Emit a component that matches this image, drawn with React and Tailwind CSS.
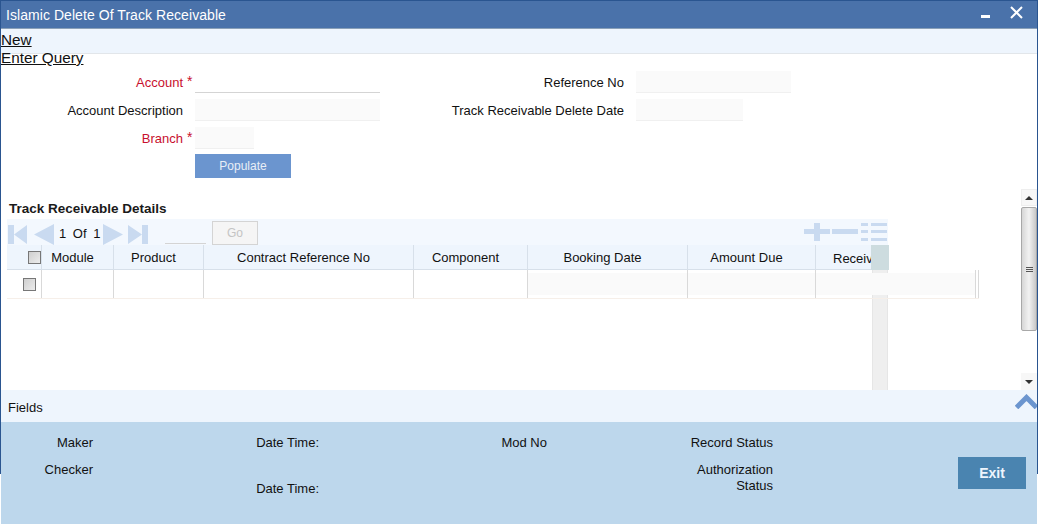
import React from "react";

const FONT = "font-['Liberation_Sans',Arial,sans-serif]";

const Field = ({ label, required, labelWidth, inputWidth, underline }) => (
  <div className="flex h-[22px] items-center">
    <div className={`pt-px text-right text-[13px] ${required ? "text-[#c8102e]" : "text-[#111]"}`} style={{ width: labelWidth }}>
      {label}
    </div>
    <div className="w-[12px] self-start pl-[4px] pt-[3px] text-sm leading-none text-[#c8102e]">{required ? "*" : ""}</div>
    <div
      className={`h-[22px] border-b ${underline ? "bg-white border-[#d4d4d4]" : "bg-[#fafafa] border-[#f0f0f0]"}`}
      style={{ width: inputWidth }}
    />
  </div>
);

const Check = () => (
  <div className="h-[13px] w-[13px] border border-[#777] bg-gradient-to-br from-[#cfcfcf] to-[#ececec]" />
);

const HeadCell = ({ width, children }) => (
  <div className="flex h-full items-center justify-center border-r border-[#d7e0ea] pr-[10px] pt-px text-[13px] text-[#111]" style={{ width }}>
    {children}
  </div>
);

const RowCell = ({ width, filled }) => (
  <div className="h-full border-r border-[#d9d9d9] py-[3px]" style={{ width }}>
    <div className={`h-full ${filled ? "bg-[#fafafa]" : "bg-white"}`} />
  </div>
);

const App = () => {
  const columns = [
    ["Module", 72],
    ["Product", 90],
    ["Contract Reference No", 210],
    ["Component", 114],
    ["Booking Date", 160],
    ["Amount Due", 128],
  ];

  return (
    <div className={`relative flex h-[524px] w-[1038px] flex-col overflow-hidden bg-white ${FONT}`}>
      {/* title bar */}
      <div className="flex h-[29px] shrink-0 items-center justify-between border-t border-b border-t-[#2a5590] border-b-[#8aa0b8] bg-[#4a72aa] pl-[6px] pr-[15px] text-sm tracking-[0.06px] text-white">
        <span>Islamic Delete Of Track Receivable</span>
        <div className="flex items-center gap-[20px]">
          <div className="mt-[3px] h-[3px] w-[9px] bg-white" />
          <svg width="13" height="13" viewBox="0 0 13 13" className="mb-[4px]" stroke="#fff" strokeWidth="2" fill="none">
            <path d="M1 1l11 11M12 1L1 12" />
          </svg>
        </div>
      </div>

      {/* toolbar */}
      <div className="relative h-[25px] shrink-0 border-b border-[#e2e6ea] bg-[#eef5fd] pl-[1px] text-[15.300px] text-[#111]">
        <div className="mt-[2px] leading-[18px] underline">New</div>
        <div className="leading-[18px] underline">Enter Query</div>
      </div>

      {/* form */}
      <div className="flex h-[135px] shrink-0 pt-[17px]">
        <div className="flex w-[400px] flex-col gap-[6px]">
          <Field label="Account" required labelWidth={183} inputWidth={185} underline />
          <Field label="Account Description" labelWidth={183} inputWidth={185} />
          <Field label="Branch" required labelWidth={183} inputWidth={59} />
          <div className="ml-[195px] mt-[-1px] flex h-6 w-24 items-center justify-center bg-[#6b95cf] text-xs text-[#e8eef6]">
            Populate
          </div>
        </div>
        <div className="flex flex-col gap-[6px]">
          <Field label="Reference No" labelWidth={224} inputWidth={155} />
          <Field label="Track Receivable Delete Date" labelWidth={224} inputWidth={107} />
        </div>
      </div>

      {/* details */}
      <div className="relative flex h-[201px] shrink-0">
        <div className="relative min-w-0 flex-1 pl-[7px]">
          <div className="pl-[2px] pt-[12px] text-[13.500px] font-bold leading-[16px] text-[#1a1a1a]">Track Receivable Details</div>
          <div className="mt-[2px] flex h-[26px] w-[881px] items-center bg-[#f3f8fe] text-[13px] text-[#111]">
            <svg width="46" height="21" viewBox="0 0 46 21" fill="#c9daf0" className="ml-[1px] mt-[4px] shrink-0">
              <path d="M0 1h6v19H0zM6 10.500L19 1v19zM26 10.500L46 0v21z" />
            </svg>
            <span className="ml-[5px] w-[39px] whitespace-nowrap pt-[3px] [word-spacing:3px]">1 Of 1</span>
            <svg width="45" height="21" viewBox="0 0 45 21" fill="#c9daf0" className="ml-[5px] mt-[4px] shrink-0">
              <path d="M0 0l20 10.500L0 21zM25 1l14 9.500L25 20zM39 1h6v19h-6z" />
            </svg>
            <div className="ml-[17px] mt-[-1px] h-[25px] w-[41px] shrink-0 border-b border-[#d4d4d4]" />
            <div className="ml-[6px] mt-[1px] flex h-[24px] w-[46px] shrink-0 items-center justify-center border border-[#d4d4d4] bg-[#f5f5f5] text-xs text-[#c4c4c4]">
              Go
            </div>
            <svg width="83" height="18" viewBox="0 0 83 18" fill="#c9daf0" className="ml-[546px] shrink-0">
              <path d="M0 6h10V0h6v6h10v5H16v7h-6v-7H0zM28 6h26v5H28zM57 0h7v3h-7zM67 0h16v3H67zM57 7h7v3h-7zM67 7h16v3H67zM57 15h7v3h-7zM67 15h16v3H67z" />
            </svg>
          </div>

          {/* table */}
          <div className="flex h-[25px] w-[865px] border-b border-[#d7e0ea] bg-[#eef5fd]">
            <div className="flex h-full w-[35px] items-center justify-end border-r border-[#d7e0ea]">
              <Check />
            </div>
            {columns.map(([name, width]) => (
              <HeadCell key={name} width={width}>{name}</HeadCell>
            ))}
            <div className="flex-1 overflow-hidden whitespace-nowrap pl-[17px] pt-[4px] text-[13px] text-[#111]">Receiv</div>
          </div>
          <div className="relative z-10 flex h-[29px] w-[972px] border-b border-[#f6efe9]">
            <div className="flex h-full w-[35px] items-center justify-end border-r border-[#d9d9d9] pr-[5px]">
              <Check />
            </div>
            <RowCell width={72} />
            <RowCell width={90} />
            <RowCell width={210} />
            <RowCell width={114} />
            <RowCell width={160} filled />
            <RowCell width={128} filled />
            <RowCell width={160} filled />
            <div className="w-[3px] border-r border-[#d9d9d9]" />
          </div>
          {/* stray column scrollbar over the table */}
          <div className="absolute left-[871px] top-[56px] h-[25px] w-[18px] bg-[#cddcdf]" />
          <div className="absolute left-[872px] top-[81px] h-[120px] w-[16px] border-x border-[#e6e6e6] bg-[#efefef]" />
        </div>

        {/* scrollbar */}
        <div className="flex w-[17px] shrink-0 flex-col items-center pr-[1px]">
          <div className="flex h-[17px] w-full items-center justify-center border border-[#eee] bg-[#f7f7f7]">
            <div className="h-0 w-0 border-x-[4px] border-b-[4px] border-x-transparent border-b-[#333]" />
          </div>
          <div className="mt-[1px] flex h-[124px] w-full flex-col items-center justify-center gap-[1px] rounded-[2px] border border-[#a8a8a8] bg-gradient-to-r from-[#d6d6d6] via-[#f2f2f2] to-[#c8c8c8]">
            <div className="h-px w-[7px] bg-[#555]" />
            <div className="h-px w-[7px] bg-[#555]" />
            <div className="h-px w-[7px] bg-[#555]" />
          </div>
          <div className="flex-1" />
          <div className="flex h-[17px] w-full items-center justify-center bg-[#f7f7f7]">
            <div className="h-0 w-0 border-x-[4px] border-t-[4px] border-x-transparent border-t-[#333]" />
          </div>
        </div>
      </div>

      {/* fields bar */}
      <div className="flex h-[32px] shrink-0 justify-between bg-[#eef5fd] pl-[8px] text-[13px] text-[#111]">
        <span className="pt-[10px] leading-4">Fields</span>
        <svg width="23" height="15" viewBox="0 0 23 15" fill="none" stroke="#6b95cf" strokeWidth="5" className="mt-[4px]">
          <path d="M1.500 13.500L11.500 3.500L21.500 13.500" />
        </svg>
      </div>

      {/* audit footer */}
      <div className="mx-px flex flex-1 bg-[#bdd7ec] text-[13px] leading-4 text-[#111]">
        <div className="flex w-[92px] flex-col items-end gap-[11px] pt-[13px]">
          <span>Maker</span>
          <span>Checker</span>
        </div>
        <div className="flex w-[226px] flex-col items-end gap-[30px] pt-[13px]">
          <span>Date Time:</span>
          <span>Date Time:</span>
        </div>
        <div className="w-[228px] pt-[13px] text-right">Mod No</div>
        <div className="flex w-[226px] flex-col items-end gap-[11px] pt-[13px] text-right">
          <span>Record Status</span>
          <span>
            Authorization
            <br />
            Status
          </span>
        </div>
        <div className="ml-[185px] mt-[35px] flex h-[32px] w-[68px] items-center justify-center bg-[#4a84b0] pb-px text-sm font-bold text-[#eef5fd]">
          Exit
        </div>
      </div>

      {/* window edge, stops where the footer overhangs */}
      <div className="absolute left-0 top-0 h-[474px] w-px bg-[#2a5590]" />
      <div className="absolute right-0 top-0 h-[474px] w-px bg-[#2a5590]" />
    </div>
  );
};

export default App;
